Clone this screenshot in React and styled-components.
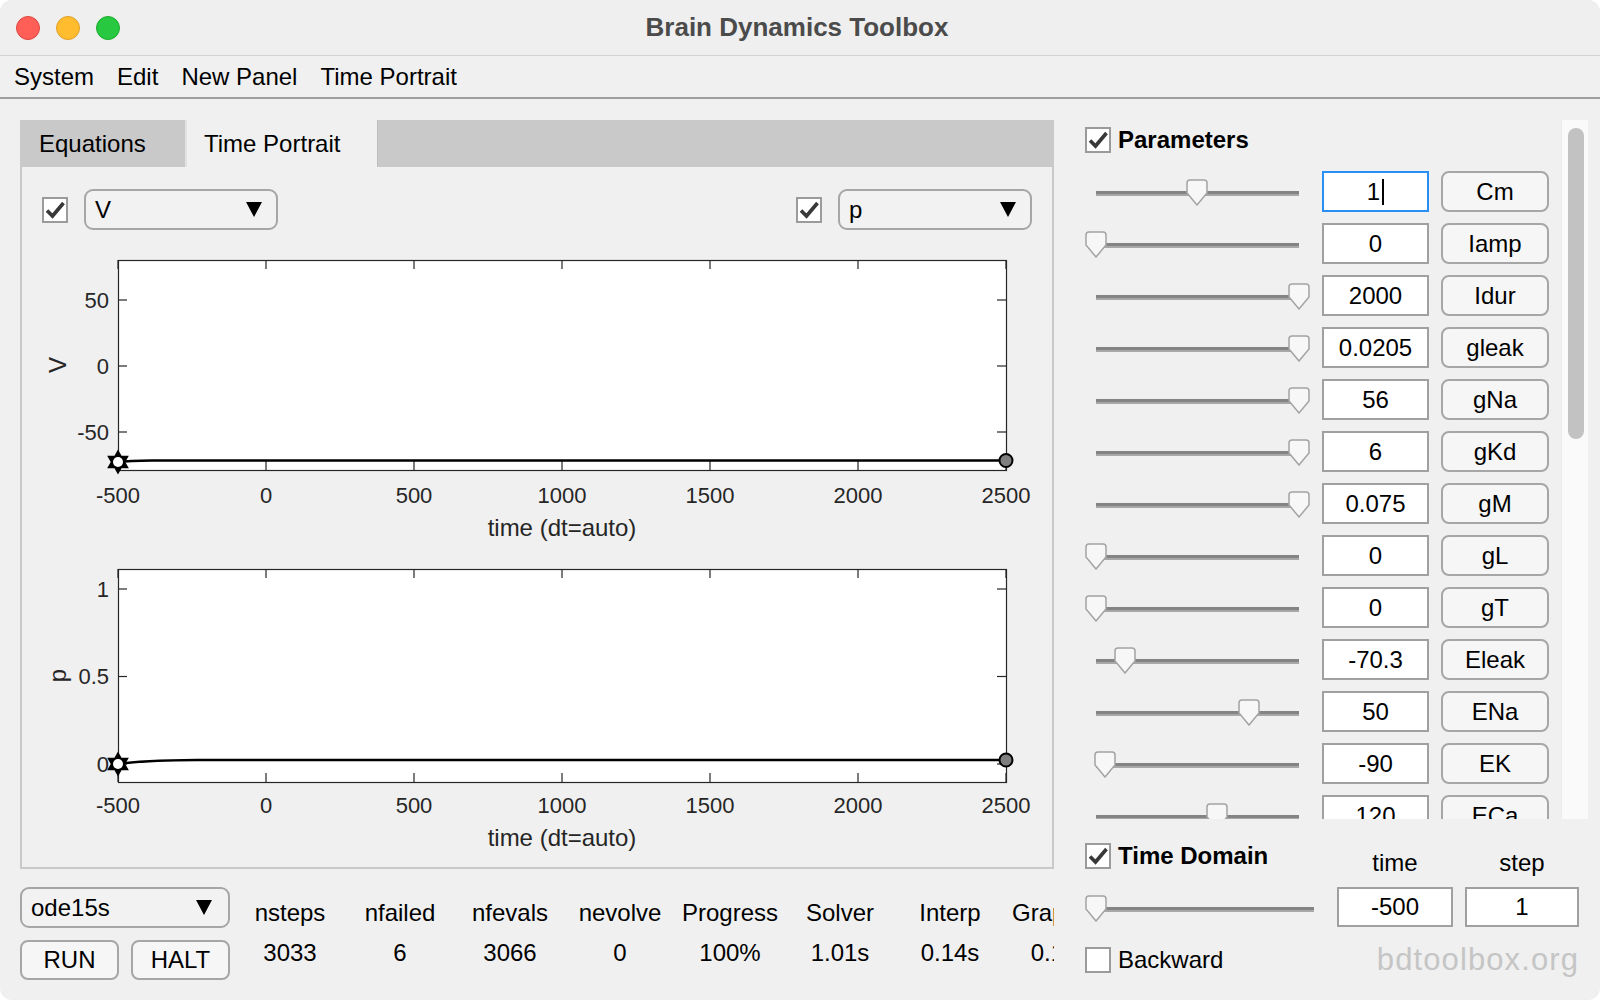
import React from 'react'
import styled, { createGlobalStyle } from 'styled-components'

const GlobalStyle = createGlobalStyle`
  html, body { margin: 0; padding: 0; background: #ffffff; }
  body { font-family: "Liberation Sans", Arial, Helvetica, sans-serif; }
  * { box-sizing: border-box; }
`

const params = [
  { name: 'Cm', value: '1', pos: 0.497, focused: true },
  { name: 'Iamp', value: '0', pos: 0 },
  { name: 'Idur', value: '2000', pos: 1 },
  { name: 'gleak', value: '0.0205', pos: 1 },
  { name: 'gNa', value: '56', pos: 1 },
  { name: 'gKd', value: '6', pos: 1 },
  { name: 'gM', value: '0.075', pos: 1 },
  { name: 'gL', value: '0', pos: 0 },
  { name: 'gT', value: '0', pos: 0 },
  { name: 'Eleak', value: '-70.3', pos: 0.143 },
  { name: 'ENa', value: '50', pos: 0.753 },
  { name: 'EK', value: '-90', pos: 0.043 },
  { name: 'ECa', value: '120', pos: 0.596 },
]

const stats = [
  ['nsteps', '3033'],
  ['nfailed', '6'],
  ['nfevals', '3066'],
  ['nevolve', '0'],
  ['Progress', '100%'],
  ['Solver', '1.01s'],
  ['Interp', '0.14s'],
  ['Graphics', '0.12s'],
]

function Checkbox({ checked }) {
  return (
    <CheckBox>
      {checked && (
        <svg width="22" height="22" viewBox="0 0 22 22">
          <path d="M3 11.5 L8.5 17 L19.5 4" fill="none" stroke="#383838" strokeWidth="3.6" />
        </svg>
      )}
    </CheckBox>
  )
}

function Dropdown({ label, width, pad }) {
  return (
    <Select $w={width} $pad={pad}>
      <span>{label}</span>
      <svg width="16" height="15" viewBox="0 0 16 15">
        <polygon points="0,0 16,0 8,15" fill="#000" />
      </svg>
    </Select>
  )
}

function Slider({ pos, width }) {
  const travel = width - 22
  return (
    <SliderBox $w={width}>
      <Track $w={width - 22} />
      <Thumb style={{ left: pos * travel }} width="22" height="27" viewBox="0 0 22 27">
        <path d="M1 4 Q1 1 4 1 H18 Q21 1 21 4 V14 L11 26 L1 14 Z" fill="#f7f7f7" stroke="#a3a3a3" strokeWidth="1.5" />
      </Thumb>
    </SliderBox>
  )
}

const hexagram = (cx, cy, R) => {
  const pts = []
  for (let k = 0; k < 12; k++) {
    const a = ((-90 + k * 30) * Math.PI) / 180
    const r = k % 2 === 0 ? R : R * 0.577
    pts.push(`${(cx + r * Math.cos(a)).toFixed(2)},${(cy + r * Math.sin(a)).toFixed(2)}`)
  }
  return pts.join(' ')
}

function Plot({ top, bottom, yTicks, ylabel, line, start, end, tickY, xlabelY }) {
  const L = 96
  const R = 984
  const xOf = t => L + ((t + 500) / 3000) * (R - L)
  const xt = [-500, 0, 500, 1000, 1500, 2000, 2500]
  const mid = (top + bottom) / 2
  return (
    <PlotSvg width="1030" height="300" viewBox="0 0 1030 300">
      <rect x={L + 0.5} y={top + 0.5} width={R - L} height={bottom - top} fill="#fff" stroke="#262626" strokeWidth="1.2" />
      {xt.map(t => (
        <g key={t}>
          <line x1={xOf(t)} x2={xOf(t)} y1={bottom} y2={bottom - 9} stroke="#262626" strokeWidth="1.2" />
          <line x1={xOf(t)} x2={xOf(t)} y1={top} y2={top + 9} stroke="#262626" strokeWidth="1.2" />
          <text x={xOf(t)} y={tickY} textAnchor="middle" dominantBaseline="central" fontSize="22" fill="#262626">{t}</text>
        </g>
      ))}
      {yTicks.map(([label, y]) => (
        <g key={label}>
          <line x1={L} x2={L + 9} y1={y} y2={y} stroke="#262626" strokeWidth="1.2" />
          <line x1={R} x2={R - 9} y1={y} y2={y} stroke="#262626" strokeWidth="1.2" />
          <text x={L - 9} y={y} textAnchor="end" dominantBaseline="central" fontSize="22" fill="#262626">{label}</text>
        </g>
      ))}
      <text x="35" y={mid} textAnchor="middle" dominantBaseline="central" fontSize="24" fill="#262626" transform={`rotate(-90 35 ${mid})`}>{ylabel}</text>
      <text x={(L + R) / 2} y={xlabelY} textAnchor="middle" dominantBaseline="central" fontSize="24" fill="#262626">time (dt=auto)</text>
      <path d={line} fill="none" stroke="#000" strokeWidth="2.6" />
      <circle cx={R} cy={end} r="6.5" fill="#7f7f7f" stroke="#000" strokeWidth="2" />
      <polygon points={hexagram(L, start, 11)} fill="#000" stroke="#000" strokeWidth="1.5" />
      <circle cx={L} cy={start} r="5" fill="#fff" />
    </PlotSvg>
  )
}

export default function App() {
  return (
    <>
      <GlobalStyle />
      <Window>
        <TitleBar>
          <Lights>
            <Light $bg="#ff5f57" $edge="#e2463f" />
            <Light $bg="#febc2e" $edge="#dfa123" />
            <Light $bg="#28c840" $edge="#1dad2b" />
          </Lights>
          <Title>Brain Dynamics Toolbox</Title>
          <span />
        </TitleBar>
        <MenuBar>
          <span>System</span>
          <span>Edit</span>
          <span>New Panel</span>
          <span>Time Portrait</span>
        </MenuBar>
        <Body>
          <LeftColumn>
            <TabPanel>
              <TabBar>
                <Tab $w={165}>Equations</Tab>
                <Tab $w={193} $active>Time Portrait</Tab>
              </TabBar>
              <PanelBody>
                <ControlsRow>
                  <ControlGroup>
                    <Checkbox checked />
                    <Dropdown label="V" width={194} pad={14} />
                  </ControlGroup>
                  <ControlGroup>
                    <Checkbox checked />
                    <Dropdown label="p" width={194} pad={14} />
                  </ControlGroup>
                </ControlsRow>
                <PlotWrap $mt={15}>
                  <Plot
                    top={15}
                    bottom={225}
                    yTicks={[['50', 55], ['0', 121], ['-50', 187]]}
                    ylabel="V"
                    line="M96,217 C104,216 112,215.6 130,215.5 L984,215.5"
                    start={217}
                    end={215.5}
                    tickY={250}
                    xlabelY={282}
                  />
                </PlotWrap>
                <PlotWrap $mt={9}>
                  <Plot
                    top={15}
                    bottom={228}
                    yTicks={[['1', 35], ['0.5', 122.5], ['0', 210]]}
                    ylabel="p"
                    line="M96,210 C112,207.5 132,206.3 175,206 L984,206"
                    start={210}
                    end={206}
                    tickY={251}
                    xlabelY={283}
                  />
                </PlotWrap>
              </PanelBody>
            </TabPanel>
            <BottomBar>
              <SolverControls>
                <Dropdown label="ode15s" width={210} pad={16} />
                <PushButton>RUN</PushButton>
                <PushButton>HALT</PushButton>
              </SolverControls>
              <Stats>
                {stats.map(([h, v]) => (
                  <React.Fragment key={h}>
                    <StatCell>{h}</StatCell>
                    <StatCell>{v}</StatCell>
                  </React.Fragment>
                ))}
              </Stats>
            </BottomBar>
          </LeftColumn>
          <RightColumn>
            <ScrollArea>
              <ParamList>
                <SectionHeader>
                  <Checkbox checked />
                  <span>Parameters</span>
                </SectionHeader>
                <Rows>
                  {params.map(p => (
                    <ParamRow key={p.name}>
                      <Slider pos={p.pos} width={225} />
                      <EditBox $w={107} $h={41} $focused={p.focused}>
                        {p.value}
                        {p.focused && <Caret />}
                      </EditBox>
                      <LabelButton>{p.name}</LabelButton>
                    </ParamRow>
                  ))}
                </Rows>
              </ParamList>
              <ScrollBar>
                <ScrollThumb />
              </ScrollBar>
            </ScrollArea>
            <TimeGrid>
              <SectionHeader>
                <Checkbox checked />
                <span>Time Domain</span>
              </SectionHeader>
              <ColLabel>time</ColLabel>
              <ColLabel>step</ColLabel>
              <Slider pos={0} width={240} />
              <EditBox $w={116} $h={40}>-500</EditBox>
              <EditBox $w={114} $h={40}>1</EditBox>
              <CheckLine>
                <Checkbox />
                <span>Backward</span>
              </CheckLine>
              <Brand>bdtoolbox.org</Brand>
            </TimeGrid>
          </RightColumn>
        </Body>
      </Window>
    </>
  )
}

const Window = styled.div`
  width: 1600px;
  height: 1000px;
  background: #f0f0f0;
  border-radius: 12px;
  overflow: hidden;
  display: flex;
  flex-direction: column;
  color: #000;
  font-size: 24px;
`

const TitleBar = styled.div`
  height: 56px;
  flex: none;
  display: grid;
  grid-template-columns: 1fr auto 1fr;
  align-items: center;
  background: #efefef;
  border-bottom: 1px solid #d3d3d3;
`

const Lights = styled.div`
  display: flex;
  gap: 16px;
  padding-left: 16px;
`

const Light = styled.span`
  width: 24px;
  height: 24px;
  border-radius: 50%;
  background: ${p => p.$bg};
  border: 1px solid ${p => p.$edge};
`

const Title = styled.div`
  font-size: 26px;
  font-weight: 700;
  color: #4b4b4b;
  margin-right: 6px;
`

const MenuBar = styled.div`
  height: 43px;
  flex: none;
  display: flex;
  align-items: center;
  gap: 23px;
  padding-left: 14px;
  border-bottom: 2px solid #9e9e9e;
`

const Body = styled.div`
  flex: 1;
  display: flex;
  gap: 31px;
  padding: 21px 12px 0 20px;
`

const LeftColumn = styled.div`
  width: 1034px;
  flex: none;
  display: flex;
  flex-direction: column;
`

const TabPanel = styled.div`
  height: 749px;
  display: flex;
  flex-direction: column;
`

const TabBar = styled.div`
  height: 47px;
  flex: none;
  display: flex;
  background: #c9c9c9;
`

const Tab = styled.div`
  width: ${p => p.$w}px;
  display: flex;
  align-items: center;
  padding-left: 17px;
  background: ${p => (p.$active ? '#f0f0f0' : '#c9c9c9')};
  border-left: 2px solid ${p => (p.$active ? '#e2e2e2' : '#c9c9c9')};
  border-right: 1px solid ${p => (p.$active ? '#bdbdbd' : '#c9c9c9')};
`

const PanelBody = styled.div`
  flex: 1;
  display: flex;
  flex-direction: column;
  border: 2px solid #c9c9c9;
  border-top: none;
`

const ControlsRow = styled.div`
  margin-top: 22px;
  height: 41px;
  display: flex;
  justify-content: space-between;
  align-items: center;
  padding: 0 20px;
`

const ControlGroup = styled.div`
  display: flex;
  align-items: center;
  gap: 16px;
`

const CheckBox = styled.div`
  width: 26px;
  height: 26px;
  flex: none;
  border: 2px solid #9b9b9b;
  background: #fff;
  display: flex;
  align-items: center;
  justify-content: center;
`

const Select = styled.div`
  width: ${p => p.$w}px;
  height: 41px;
  flex: none;
  display: flex;
  align-items: center;
  justify-content: space-between;
  padding: 0 ${p => p.$pad}px 0 9px;
  border: 2px solid #a6a6a6;
  border-radius: 9px;
  background: #f2f2f2;
`

const PlotWrap = styled.div`
  margin-top: ${p => p.$mt}px;
  display: flex;
`

const PlotSvg = styled.svg`
  display: block;
  font-family: "Liberation Sans", Arial, sans-serif;
`

const BottomBar = styled.div`
  display: flex;
  gap: 5px;
  padding-top: 18px;
`

const SolverControls = styled.div`
  width: 210px;
  flex: none;
  display: grid;
  grid-template-columns: 99px 99px;
  column-gap: 12px;
  row-gap: 12px;
  & > :first-child {
    grid-column: 1 / 3;
  }
`

const PushButton = styled.div`
  height: 40px;
  display: flex;
  align-items: center;
  justify-content: center;
  border: 2px solid #a6a6a6;
  border-radius: 8px;
  background: #f6f6f6;
`

const Stats = styled.div`
  width: 819px;
  overflow: hidden;
  display: grid;
  grid-template-columns: repeat(8, 110px);
  grid-template-rows: 40px 40px;
  grid-auto-flow: column;
  padding-top: 6px;
`

const StatCell = styled.div`
  text-align: center;
  line-height: 40px;
  white-space: nowrap;
`

const RightColumn = styled.div`
  width: 503px;
  flex: none;
  display: flex;
  flex-direction: column;
`

const ScrollArea = styled.div`
  height: 699px;
  display: flex;
`

const ParamList = styled.div`
  flex: 1;
  overflow: hidden;
  padding-top: 7px;
`

const SectionHeader = styled.div`
  display: flex;
  align-items: center;
  gap: 7px;
  height: 26px;
  font-weight: 700;
`

const Rows = styled.div`
  margin-top: 18px;
  display: flex;
  flex-direction: column;
  gap: 11px;
`

const ParamRow = styled.div`
  display: flex;
  gap: 12px;
`

const SliderBox = styled.div`
  position: relative;
  width: ${p => p.$w}px;
  height: 40px;
  flex: none;
`

const Track = styled.div`
  position: absolute;
  left: 11px;
  top: 20px;
  width: ${p => p.$w}px;
  height: 5px;
  background: linear-gradient(#848484 0 60%, #a8a8a8 60% 100%);
`

const Thumb = styled.svg`
  position: absolute;
  top: 8px;
  display: block;
`

const EditBox = styled.div`
  width: ${p => p.$w}px;
  height: ${p => p.$h}px;
  flex: none;
  display: flex;
  align-items: center;
  justify-content: center;
  background: #fff;
  border: 2px solid ${p => (p.$focused ? '#2a8ff5' : '#a0a0a0')};
`

const Caret = styled.span`
  display: inline-block;
  width: 2px;
  height: 26px;
  margin-left: 2px;
  background: #000;
`

const LabelButton = styled.div`
  width: 108px;
  height: 41px;
  flex: none;
  display: flex;
  align-items: center;
  justify-content: center;
  border: 2px solid #a6a6a6;
  border-radius: 8px;
  background: #f6f6f6;
`

const ScrollBar = styled.div`
  width: 27px;
  flex: none;
  background: #fafafa;
  border-left: 1px solid #ececec;
  padding: 8px 4px 0 6px;
`

const ScrollThumb = styled.div`
  height: 311px;
  border-radius: 8px;
  background: #c2c2c2;
`

const TimeGrid = styled.div`
  margin-top: 24px;
  display: grid;
  grid-template-columns: 240px 116px 114px;
  grid-template-rows: 44px 40px 46px;
  column-gap: 12px;
`

const ColLabel = styled.div`
  align-self: end;
  margin-bottom: 10px;
  line-height: 28px;
  text-align: center;
`

const CheckLine = styled.div`
  align-self: end;
  display: flex;
  align-items: center;
  gap: 7px;
  height: 27px;
`

const Brand = styled.div`
  grid-column: 2 / 4;
  align-self: end;
  text-align: right;
  line-height: 27px;
  font-size: 31px;
  letter-spacing: 1.1px;
  color: #c5c5c5;
`
